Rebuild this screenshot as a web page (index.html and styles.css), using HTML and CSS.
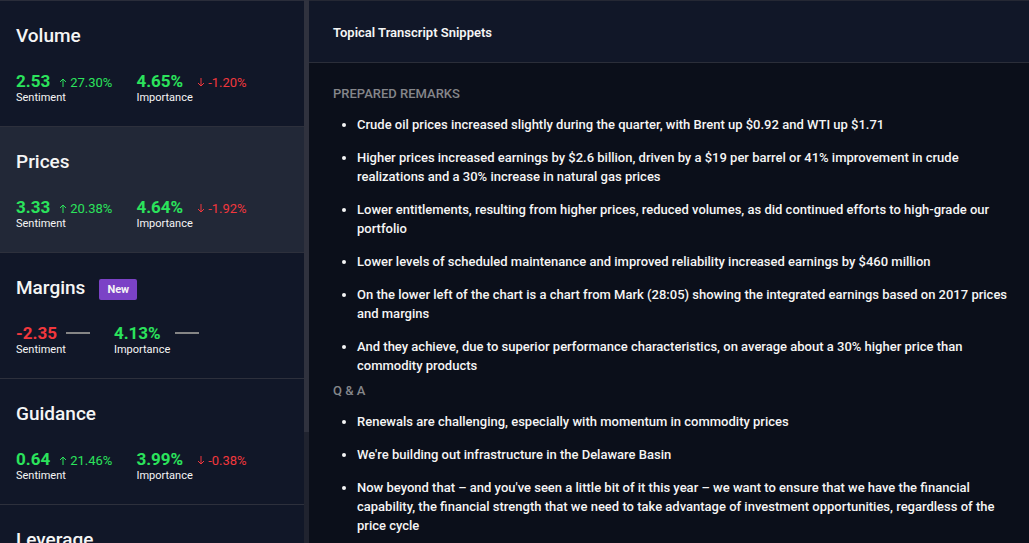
FILE: index.html
```html
<!DOCTYPE html>
<html lang="en">
<head>
<meta charset="utf-8">
<title>Topical Transcript Snippets</title>
<meta name="viewport" content="width=device-width, initial-scale=1">
<link rel="stylesheet" href="styles.css">
</head>
<body>
<svg class="symbols" aria-hidden="true">
  <symbol id="arrow-up" viewBox="0 0 8 9"><path d="M4 9V1M1 4l3-3 3 3" fill="none" stroke="currentColor"/></symbol>
  <symbol id="arrow-down" viewBox="0 0 8 9"><path d="M4 0v8M1 5l3 3 3-3" fill="none" stroke="currentColor"/></symbol>
</svg>
<div class="app">
  <nav class="sidebar" aria-label="Topics">
    <div class="topics">
      <button class="topic" type="button">
        <span class="topic-head"><span class="topic-name">Volume</span></span>
        <span class="metrics">
          <span class="metric"><span class="reading"><span class="value up">2.53</span><span class="change up"><svg class="arrow"><use href="#arrow-up"/></svg>27.30%</span></span><span class="label">Sentiment</span></span>
          <span class="metric"><span class="reading wide"><span class="value up">4.65%</span><span class="change down"><svg class="arrow"><use href="#arrow-down"/></svg>-1.20%</span></span><span class="label">Importance</span></span>
        </span>
      </button>
      <button class="topic selected" type="button" aria-current="true">
        <span class="topic-head"><span class="topic-name">Prices</span></span>
        <span class="metrics">
          <span class="metric"><span class="reading"><span class="value up">3.33</span><span class="change up"><svg class="arrow"><use href="#arrow-up"/></svg>20.38%</span></span><span class="label">Sentiment</span></span>
          <span class="metric"><span class="reading wide"><span class="value up">4.64%</span><span class="change down"><svg class="arrow"><use href="#arrow-down"/></svg>-1.92%</span></span><span class="label">Importance</span></span>
        </span>
      </button>
      <button class="topic" type="button">
        <span class="topic-head"><span class="topic-name">Margins</span><span class="tag">New</span></span>
        <span class="metrics">
          <span class="metric"><span class="reading"><span class="value down">-2.35</span><span class="dash"></span></span><span class="label">Sentiment</span></span>
          <span class="metric"><span class="reading wide"><span class="value up">4.13%</span><span class="dash"></span></span><span class="label">Importance</span></span>
        </span>
      </button>
      <button class="topic" type="button">
        <span class="topic-head"><span class="topic-name">Guidance</span></span>
        <span class="metrics">
          <span class="metric"><span class="reading"><span class="value up">0.64</span><span class="change up"><svg class="arrow"><use href="#arrow-up"/></svg>21.46%</span></span><span class="label">Sentiment</span></span>
          <span class="metric"><span class="reading wide"><span class="value up">3.99%</span><span class="change down"><svg class="arrow"><use href="#arrow-down"/></svg>-0.38%</span></span><span class="label">Importance</span></span>
        </span>
      </button>
      <button class="topic" type="button">
        <span class="topic-head"><span class="topic-name">Leverage</span></span>
      </button>
    </div>
    <div class="track"><div class="thumb"></div></div>
  </nav>
  <main class="content">
    <header class="bar"><h1 class="title">Topical Transcript Snippets</h1></header>
    <div class="transcript">
      <h2 class="section">PREPARED REMARKS</h2>
      <ul class="snippets">
        <li>Crude oil prices increased slightly during the quarter, with Brent up $0.92 and WTI up $1.71</li>
        <li>Higher prices increased earnings by $2.6 billion, driven by a $19 per barrel or 41% improvement in crude realizations and a 30% increase in natural gas prices</li>
        <li>Lower entitlements, resulting from higher prices, reduced volumes, as did continued efforts to high-grade our portfolio</li>
        <li>Lower levels of scheduled maintenance and improved reliability increased earnings by $460 million</li>
        <li>On the lower left of the chart is a chart from Mark (28:05) showing the integrated earnings based on 2017 prices and margins</li>
        <li>And they achieve, due to superior performance characteristics, on average about a 30% higher price than commodity products</li>
      </ul>
      <h2 class="section">Q &amp; A</h2>
      <ul class="snippets">
        <li>Renewals are challenging, especially with momentum in commodity prices</li>
        <li>We're building out infrastructure in the Delaware Basin</li>
        <li>Now beyond that – and you've seen a little bit of it this year – we want to ensure that we have the financial capability, the financial strength that we need to take advantage of investment opportunities, regardless of the price cycle</li>
      </ul>
    </div>
  </main>
</div>
</body>
</html>
```
FILE: styles.css
```css
* { box-sizing: border-box; }
body {
  margin: 0;
  background: #0b0f1a;
  color: #f5f5f5;
  font: 13px/19px Roboto, sans-serif;
}
.symbols { display: none; }
.app {
  display: flex;
  height: 100vh;
  overflow: hidden;
}
.sidebar {
  display: flex;
  flex: none;
  width: 309px;
  background: #111728;
}
.topics {
  flex: 1;
  overflow: hidden;
  border-top: 1px solid #2a2d3a;
}
.track {
  width: 5px;
  background: #20232f;
}
.thumb {
  height: 432px;
  max-height: 80%;
  background: #30323e;
}
.topic {
  display: flex;
  flex-direction: column;
  gap: 21px;
  width: 100%;
  min-height: 126px;
  padding: 23px 16px 21px;
  border: 0;
  border-bottom: 1px solid #2d303c;
  background: #111728;
  color: inherit;
  font: inherit;
  text-align: left;
  cursor: pointer;
}
.selected { background: #222837; }
.topic-head {
  display: flex;
  align-items: center;
  gap: 14px;
  height: 24px;
}
.topic-name {
  font-size: 19px;
  line-height: 24px;
  font-weight: 500;
}
.tag {
  margin-top: 3px;
  padding: 1px 8px;
  border-radius: 2px;
  background: #7b42c6;
  font-size: 11px;
  font-weight: 700;
}
.metrics {
  display: flex;
  gap: 24px;
}
.metric {
  display: flex;
  flex-direction: column;
}
.reading {
  display: flex;
  align-items: baseline;
  gap: 9px;
  height: 21px;
}
.wide { gap: 14px; }
.value {
  font-size: 17px;
  line-height: 24px;
  font-weight: 700;
}
.change {
  display: flex;
  align-items: baseline;
  gap: 3px;
}
.arrow {
  width: 8px;
  height: 9px;
}
.up { color: #2be35c; }
.down { color: #f2373d; }
.dash {
  align-self: center;
  width: 24px;
  height: 2px;
  margin-top: 3px;
  background: #858585;
}
.label {
  font-size: 11px;
  line-height: 15px;
}
.content {
  flex: 1;
  min-width: 0;
  border-top: 1px solid #252834;
}
.bar {
  padding: 22px 24px 20px;
  border-bottom: 1px solid #2b2e39;
  background: #111728;
}
.title {
  margin: 0;
  font-size: 13px;
  line-height: 19px;
  font-weight: 600;
}
.transcript { padding: 21px 16px 0 24px; }
.section {
  margin: 0 0 12px;
  color: #85868a;
  font-size: 13px;
  line-height: 19px;
  font-weight: 500;
}
.snippets {
  display: flex;
  flex-direction: column;
  gap: 14px;
  margin: 0 0 6px;
  padding-left: 24px;
  font-weight: 500;
}
```
